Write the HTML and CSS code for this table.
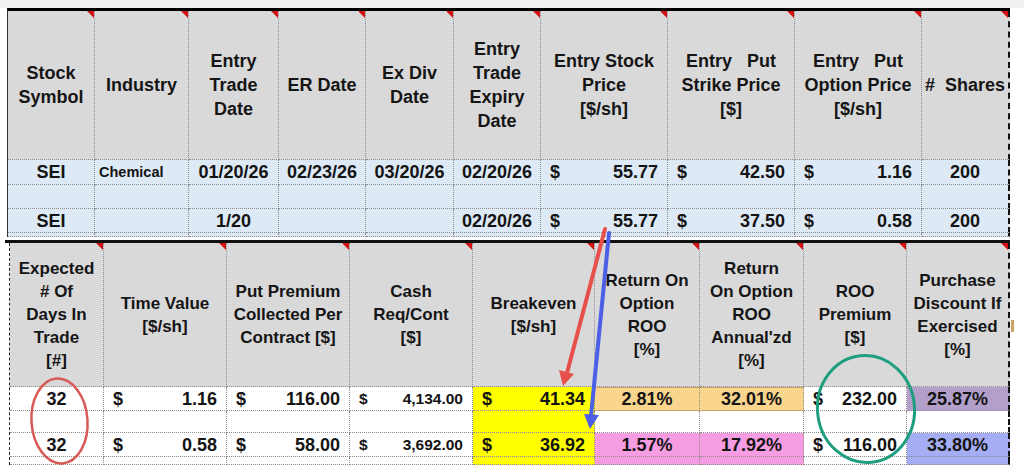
FILE: index.html
```html
<!DOCTYPE html>
<html>
<head>
<meta charset="utf-8">
<link rel="stylesheet" href="styles.css">
</head>
<body>
<div class="page">
  <div class="topstrip"></div>
  <section class="sheet sheet-top">
    <div class="cell hd">Stock<br>Symbol</div>
    <div class="cell hd">Industry</div>
    <div class="cell hd">Entry<br>Trade<br>Date</div>
    <div class="cell hd">ER Date</div>
    <div class="cell hd">Ex Div<br>Date</div>
    <div class="cell hd">Entry<br>Trade<br>Expiry<br>Date</div>
    <div class="cell hd">Entry Stock<br>Price<br>[$/sh]</div>
    <div class="cell hd">Entry&nbsp;&nbsp; Put<br>Strike Price<br>[$]</div>
    <div class="cell hd">Entry&nbsp;&nbsp; Put<br>Option Price<br>[$/sh]</div>
    <div class="cell hd last shares">#&nbsp; Shares</div>

    <div class="cell blue">SEI</div>
    <div class="cell blue left small">Chemical</div>
    <div class="cell blue">01/20/26</div>
    <div class="cell blue">02/23/26</div>
    <div class="cell blue">03/20/26</div>
    <div class="cell blue">02/20/26</div>
    <div class="cell blue acct"><span>$</span><span>55.77</span></div>
    <div class="cell blue acct"><span>$</span><span>42.50</span></div>
    <div class="cell blue acct"><span>$</span><span>1.16</span></div>
    <div class="cell blue last">200</div>

    <div class="cell blue"></div>
    <div class="cell blue"></div>
    <div class="cell blue"></div>
    <div class="cell blue"></div>
    <div class="cell blue"></div>
    <div class="cell blue"></div>
    <div class="cell blue"></div>
    <div class="cell blue"></div>
    <div class="cell blue"></div>
    <div class="cell blue last"></div>

    <div class="cell blue">SEI</div>
    <div class="cell blue"></div>
    <div class="cell blue">1/20</div>
    <div class="cell blue"></div>
    <div class="cell blue"></div>
    <div class="cell blue">02/20/26</div>
    <div class="cell blue acct"><span>$</span><span>55.77</span></div>
    <div class="cell blue acct"><span>$</span><span>37.50</span></div>
    <div class="cell blue acct"><span>$</span><span>0.58</span></div>
    <div class="cell blue last">200</div>

    <div class="cell blue"></div>
    <div class="cell blue"></div>
    <div class="cell blue"></div>
    <div class="cell blue"></div>
    <div class="cell blue"></div>
    <div class="cell blue"></div>
    <div class="cell blue"></div>
    <div class="cell blue"></div>
    <div class="cell blue"></div>
    <div class="cell blue last"></div>
  </section>

  <section class="bottom-wrap">
    <div class="sheet sheet-bottom">
      <div class="cell hd hd2">Expected<br># Of<br>Days In<br>Trade<br>[#]</div>
      <div class="cell hd hd2">Time Value<br>[$/sh]</div>
      <div class="cell hd hd2">Put Premium<br>Collected Per<br>Contract [$]</div>
      <div class="cell hd hd2">Cash<br>Req/Cont<br>[$]</div>
      <div class="cell hd hd2">Breakeven<br>[$/sh]</div>
      <div class="cell hd hd2">Return On<br>Option<br>ROO<br>[%]</div>
      <div class="cell hd hd2">Return<br>On Option<br>ROO<br>Annual'zd<br>[%]</div>
      <div class="cell hd hd2">ROO<br>Premium<br>[$]</div>
      <div class="cell hd hd2 last">Purchase<br>Discount If<br>Exercised<br>[%]</div>

      <div class="cell">32</div>
      <div class="cell acct"><span>$</span><span>1.16</span></div>
      <div class="cell acct"><span>$</span><span>116.00</span></div>
      <div class="cell acct cash"><span>$</span><span>4,134.00</span></div>
      <div class="cell acct yellow"><span>$</span><span>41.34</span></div>
      <div class="cell peach">2.81%</div>
      <div class="cell peach">32.01%</div>
      <div class="cell acct"><span>$</span><span>232.00</span></div>
      <div class="cell purple last">25.87%</div>

      <div class="cell"></div>
      <div class="cell"></div>
      <div class="cell"></div>
      <div class="cell"></div>
      <div class="cell yellow"></div>
      <div class="cell"></div>
      <div class="cell"></div>
      <div class="cell"></div>
      <div class="cell last"></div>

      <div class="cell">32</div>
      <div class="cell acct"><span>$</span><span>0.58</span></div>
      <div class="cell acct"><span>$</span><span>58.00</span></div>
      <div class="cell acct cash"><span>$</span><span>3,692.00</span></div>
      <div class="cell acct yellow"><span>$</span><span>36.92</span></div>
      <div class="cell pink">1.57%</div>
      <div class="cell pink">17.92%</div>
      <div class="cell acct"><span>$</span><span>116.00</span></div>
      <div class="cell lav last">33.80%</div>

      <div class="cell"></div>
      <div class="cell"></div>
      <div class="cell"></div>
      <div class="cell"></div>
      <div class="cell yellow"></div>
      <div class="cell pink"></div>
      <div class="cell pink"></div>
      <div class="cell"></div>
      <div class="cell lav last"></div>
    </div>
  </section>

  <svg class="annot" width="1024" height="469" viewBox="0 0 1024 469">
    <rect x="1011" y="320" width="3" height="12" fill="#c9a368"/>
    <line x1="605" y1="229" x2="567" y2="373" stroke="#e8514b" stroke-width="4" stroke-linecap="round"/>
    <polygon points="563,386 574,374 559,370" fill="#e8514b"/>
    <line x1="609" y1="233" x2="591" y2="416" stroke="#4c5fe6" stroke-width="4" stroke-linecap="round"/>
    <polygon points="590,429 599,415 584,414" fill="#4c5fe6"/>
    <ellipse cx="59.5" cy="421" rx="28" ry="42.5" transform="rotate(-4 59.5 421)" fill="none" stroke="#d85a57" stroke-width="2.5"/>
    <ellipse cx="866" cy="409" rx="48.5" ry="53.5" transform="rotate(-6 866 409)" fill="none" stroke="#1f9e7f" stroke-width="3"/>
  </svg>
</div>
</body>
</html>
```

FILE: styles.css
```css
html, body {
  margin: 0;
  padding: 0;
  background: #ffffff;
}

body {
  font-family: "Liberation Sans", Arial, sans-serif;
  font-weight: bold;
  color: #141414;
}

.page {
  position: relative;
  width: 1024px;
  height: 469px;
  overflow: hidden;
  background: #ffffff;
}

.topstrip {
  height: 8px;
  background: #f1f1f1;
}

.sheet {
  display: grid;
  box-sizing: border-box;
}

.sheet-top {
  margin-left: 7px;
  width: 1003px;
  border-top: 3px solid #000;
  border-left: 1px solid #333;
  grid-template-columns: 87px 94px 90px 87px 88px 87px 127px 127px 127px 88px;
  grid-template-rows: 149px 25px 24px 24px 4px;
}

.bottom-wrap {
  margin-top: 3px;
  margin-left: 5px;
  width: 1005px;
  border-top: 3px solid #111;
}

.sheet-bottom {
  margin-left: 4px;
  width: 1001px;
  border-left: 1px dashed #222;
  grid-template-columns: 94px 123px 123px 123px 122px 105px 104px 103px 103px;
  grid-template-rows: 144px 24px 22px 24px 8px;
}

.cell {
  box-sizing: border-box;
  border-right: 1px dotted #8c8c8c;
  border-bottom: 1px dotted #8c8c8c;
  display: flex;
  align-items: center;
  justify-content: center;
  font-size: 18px;
  line-height: 20px;
  white-space: nowrap;
  overflow: visible;
}

.hd {
  position: relative;
  background: #d9d9d9;
  text-align: center;
  line-height: 24px;
  color: #151515;
}

.hd::after {
  content: "";
  position: absolute;
  top: 0;
  right: 0;
  width: 0;
  height: 0;
  border-style: solid;
  border-width: 0 7px 7px 0;
  border-color: transparent #d40f0f transparent transparent;
}

.hd2 {
  font-size: 17px;
  line-height: 23px;
}

.shares {
  justify-content: flex-start;
  padding-left: 3px;
}

.last {
  border-right: 2px dashed #111;
}

.blue {
  background: #dde9f5;
}

.left {
  justify-content: flex-start;
  padding-left: 4px;
}

.small {
  font-size: 14.5px;
}

.acct {
  justify-content: space-between;
  padding: 0 9px 0 9px;
}

.cash {
  font-size: 15.5px;
}

.yellow {
  background: #ffff00;
}

.peach {
  background: #f9d58e;
  border-top: 1px solid #c9a468;
  border-bottom: 1px solid #c9a468;
}

.pink {
  background: #f69ce2;
}

.purple {
  background: #b3a0ca;
}

.lav {
  background: #a5aef4;
}

.annot {
  position: absolute;
  top: 0;
  left: 0;
  pointer-events: none;
}
```
